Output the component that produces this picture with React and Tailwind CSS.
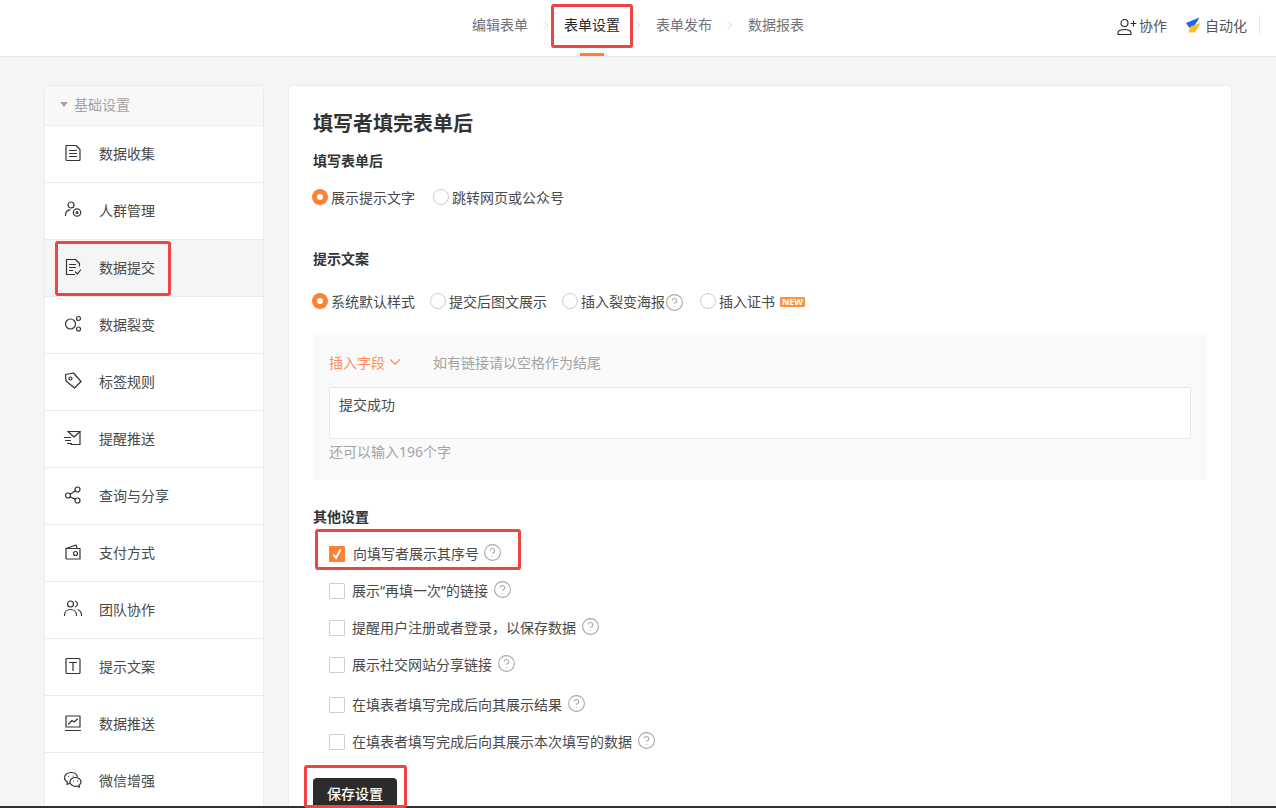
import { ChevronRight, ChevronDown, CircleHelp } from 'lucide-react';

const FONT = '"Noto Sans", "Noto Sans CJK SC", sans-serif';

const iconProps = {
  width: 20, height: 20, viewBox: '0 0 20 20', fill: 'none', stroke: '#333', strokeWidth: 1.2,
  strokeLinecap: 'round', strokeLinejoin: 'round',
};

const ICONS = {
  collect: <svg {...iconProps}><path d="M3 2.500h10l4 4v10.200a.8.8 0 0 1-.8.8H3.800a.8.8 0 0 1-.8-.8z" /><path d="M6.500 7.500h7M6.500 10.500h7M6.500 13.500h7" /></svg>,
  crowd: <svg {...iconProps}><circle cx="8" cy="5" r="3" /><path d="M2.500 15.500c0-3.200 1.800-5.300 4.500-5.600" /><circle cx="14" cy="12.500" r="3.700" /><circle cx="14" cy="12.500" r="1" /></svg>,
  submit: <svg {...iconProps}><path d="M16.500 9V6.500l-4-4H3.500v15h8" /><path d="M6.500 7.500h6M6.500 10.500h6M6.500 13.500h3" /><path d="M12.500 15l2 2 3-4" /></svg>,
  fission: <svg {...iconProps}><circle cx="7.500" cy="10" r="5" /><circle cx="15.500" cy="4.500" r="2" /><circle cx="15.500" cy="15" r="2" /></svg>,
  tag: <svg {...iconProps}><path d="M2.500 3.500L10.500 2l7.500 8.500-6.500 6.500L3 10z" /><circle cx="7.500" cy="7.500" r="1.500" /></svg>,
  remind: <svg {...iconProps}><path d="M5 3.500h12v13H8" /><path d="M5 3.500l6 5.500 6-5.500" /><path d="M1.500 9.500h6M2.500 12.500h5M4.500 15.500h4" /></svg>,
  share: <svg {...iconProps}><circle cx="5" cy="10.500" r="2.500" /><circle cx="14.500" cy="4.500" r="2.500" /><circle cx="14.500" cy="15.500" r="2.500" /><path d="M7.200 9.200l5.200-3.400M7.200 11.800l5.200 2.600" /></svg>,
  pay: <svg {...iconProps}><path d="M3 6.500l10-3.500 1 3" /><path d="M3 6.500h14v10.500H4a1 1 0 0 1-1-1z" /><circle cx="12.500" cy="11.500" r="2" /></svg>,
  team: <svg {...iconProps}><circle cx="7.500" cy="5" r="3" /><path d="M1.500 16.500c0-3.800 2.600-6 6-6s6 2.200 6 6" /><path d="M12.500 2.200a3 3 0 0 1 0 5.600M15 10.800c2.200.8 3.500 2.800 3.500 5.700" /></svg>,
  text: <svg {...iconProps}><rect x="3" y="2.500" width="14" height="15" rx="1" /><path d="M6.500 6.500h7M10 6.500v8" /></svg>,
  push: <svg {...iconProps}><path d="M3 3h14v11H3z" /><path d="M2.500 17.500h15" /><path d="M5.500 11l3.500-3.500 2 1.500 3.500-3" /></svg>,
  wechat: <svg {...iconProps}><path d="M6.500 13.200l-2.500 1.300.4-2.500C2.600 11 1.500 9.400 1.500 7.700c0-2.900 2.900-5.200 6.500-5.200 3 0 5.500 1.600 6.300 3.900" /><path d="M12.500 7.500c-3 0-5.500 2-5.500 4.400s2.500 4.400 5.500 4.400c.7 0 1.300-.1 1.900-.3l2.100 1.200-.5-2c1.300-.8 2-2 2-3.300 0-2.400-2.500-4.400-5.500-4.400z" /><path d="M5.500 6.500h.01M10 6h.01M10.500 11h.01M14.500 11h.01" /></svg>,
};

const MENU = [
  ['数据收集', 'collect'],
  ['人群管理', 'crowd'],
  ['数据提交', 'submit', true],
  ['数据裂变', 'fission'],
  ['标签规则', 'tag'],
  ['提醒推送', 'remind'],
  ['查询与分享', 'share'],
  ['支付方式', 'pay'],
  ['团队协作', 'team'],
  ['提示文案', 'text'],
  ['数据推送', 'push'],
  ['微信增强', 'wechat'],
];

const CHECKS = [
  { label: '向填写者展示其序号', checked: true, cls: 'h-[37px]' },
  { label: '展示“再填一次”的链接', cls: 'h-[37px]' },
  { label: '提醒用户注册或者登录，以保存数据', cls: 'h-[37px]' },
  { label: '展示社交网站分享链接', cls: 'h-[37px]' },
  { label: '在填表者填写完成后向其展示结果', cls: 'h-[40px] pt-[3px]' },
  { label: '在填表者填写完成后向其展示本次填写的数据', cls: 'h-[37px]' },
];

function Help({ className = '' }) {
  return <CircleHelp size={19} strokeWidth={1.4} className={`text-[#a8a8a8] ${className}`} />;
}

function Radio({ label, checked, after, className = '' }) {
  return (
    <div className={`flex items-center ${className}`}>
      {checked ? (
        <span className="mr-[3px] flex h-[16px] w-[16px] items-center justify-center rounded-full bg-[#ff8133]">
          <span className="h-[6px] w-[6px] rounded-full bg-white" />
        </span>
      ) : (
        <span className="mr-[3px] h-[16px] w-[16px] rounded-full border border-[#cfcfcf] bg-white" />
      )}
      <span className="text-[14px] text-[#4a4a4a]">{label}</span>
      {after}
    </div>
  );
}

function Tab({ label, active }) {
  return (
    <div className={`relative flex h-full items-center pb-[8px] text-[14px] ${active ? 'text-[#27272a]' : 'text-[#71717a]'}`}>
      {label}
      {active && <span className="absolute bottom-0 left-1/2 h-[3px] w-[24px] -translate-x-1/2 bg-[#ff8133]" />}
    </div>
  );
}

function Sep() {
  return <ChevronRight size={14} strokeWidth={1.2} className="mx-[11px] mb-[6px] text-[#c4c4c4]" />;
}

export default function App() {
  return (
    <div className="relative flex h-[808px] flex-col overflow-hidden bg-[#f5f5f5]" style={{ fontFamily: FONT }}>
      {/* top bar */}
      <header className="relative flex h-[57px] shrink-0 items-center justify-center border-b border-[#e8e8e8] bg-white">
        <div className="flex h-full items-center">
          <Tab label="编辑表单" />
          <Sep />
          <Tab label="表单设置" active />
          <Sep />
          <Tab label="表单发布" />
          <Sep />
          <Tab label="数据报表" />
        </div>
        <div className="absolute right-[16px] top-0 flex h-[50px] items-center text-[14px] text-[#52525b]">
          <svg width="20" height="18" viewBox="0 0 20 18" fill="none" stroke="#27272a" strokeWidth="1.1" strokeLinecap="round" className="mr-[2px] mt-[3px]">
            <circle cx="7.500" cy="5" r="3.500" />
            <path d="M1 16.500v-1.500c0-2.200 2-3.500 6.500-3.500s6.500 1.300 6.500 3.500v1.500z" />
            <path d="M14 5.500h5M16.500 3v5" />
          </svg>
          <span>协作</span>
          <svg width="16" height="16" viewBox="0 0 16 16" className="ml-[18px] mr-[4px]">
            <path d="M14.500 0.500L1 6l3.500 5L10 8z" fill="#2563eb" />
            <path d="M15.500 6L5.500 9.500 3.500 15.500h6.500z" fill="#fbbf24" />
          </svg>
          <span>自动化</span>
          <span className="ml-[12px] h-[20px] w-px bg-[#e5e5e5]" />
        </div>
      </header>

      <main className="flex min-h-0 flex-1 items-start gap-[24px] overflow-hidden pl-[44px] pr-[44px] pt-[28px]">
        {/* side menu */}
        <aside className="w-[220px] shrink-0 rounded-t-[4px] border border-[#ececec] bg-white">
          <div className="flex h-[40px] items-center border-b border-[#ececec] bg-[#f8f8f8] pb-[2px] pl-[15px] text-[14px] text-[#a3a3a3]">
            <span className="mr-[6px] h-0 w-0 border-x-[4px] border-t-[5px] border-x-transparent border-t-[#a3a3a3]" />
            基础设置
          </div>
          {MENU.map(([label, icon, active]) => (
            <div key={label} className={`flex h-[57px] items-center border-b border-[#ececec] pb-[2px] pl-[18px] text-[14px] text-[#4a4a4a] ${active ? 'bg-[#f5f5f5]' : ''}`}>
              <span className="mr-[16px] flex w-[20px] justify-center">{ICONS[icon]}</span>
              {label}
            </div>
          ))}
        </aside>

        {/* form card */}
        <section className="w-[944px] shrink-0 rounded-t-[4px] border border-[#ececec] bg-white px-[24px] pt-[23px]">
          <h1 className="text-[20px] font-bold leading-[30px] text-[#333]">填写者填完表单后</h1>
          <h2 className="mt-[11px] text-[14px] font-bold leading-[22px] text-[#333]">填写表单后</h2>
          <div className="-ml-px mt-[14px] flex h-[22px] items-center">
            <Radio label="展示提示文字" checked />
            <Radio label="跳转网页或公众号" className="ml-[18px]" />
          </div>
          <h2 className="mt-[40px] text-[14px] font-bold leading-[22px] text-[#333]">提示文案</h2>
          <div className="-ml-px mt-[20px] flex h-[22px] items-center">
            <Radio label="系统默认样式" checked />
            <Radio label="提交后图文展示" className="ml-[15px]" />
            <Radio label="插入裂变海报" className="ml-[15px]" after={<Help className="mt-[3px]" />} />
            <Radio
              label="插入证书"
              className="ml-[16px]"
              after={<span className="ml-[5px] mt-[2px] rounded-[1px] bg-[#ff9240] px-[2px] text-[9px] font-bold leading-[10px] text-white">NEW</span>}
            />
          </div>

          <div className="mt-[21px] h-[147px] rounded-[2px] bg-[#fafafa] px-[16px] pt-[18px]">
            <div className="flex h-[22px] items-center text-[14px]">
              <span className="text-[#ff8a5c]">插入字段</span>
              <ChevronDown size={18} strokeWidth={1.5} className="ml-[1px] text-[#ff8a5c]" />
              <span className="ml-[29px] text-[#a3a3a3]">如有链接请以空格作为结尾</span>
            </div>
            <div className="mt-[14px] h-[52px] rounded-[2px] border border-[#e8e8e8] bg-white px-[9px] py-[7px] text-[14px] leading-[20px] text-[#4a4a4a]">
              提交成功
            </div>
            <p className="mt-[2px] text-[14px] leading-[22px] text-[#a3a3a3]">还可以输入196个字</p>
          </div>

          <h2 className="mt-[26px] text-[14px] font-bold leading-[22px] text-[#333]">其他设置</h2>
          <div className="mt-[7px] pl-[16px]">
            {CHECKS.map((c) => (
              <div key={c.label} className={`flex items-center ${c.cls}`}>
                {c.checked ? (
                  <span className="mr-[8px] flex h-[16px] w-[16px] items-center justify-center rounded-[1px] bg-[#ff8133]">
                    <svg width="10" height="12" viewBox="0 0 10 12" fill="none" stroke="#fff" strokeWidth="1.800"><path d="M1.500 6.500l2.500 3.500 4.500-8.500" /></svg>
                  </span>
                ) : (
                  <span className="mr-[7px] h-[16px] w-[16px] rounded-[1px] border border-[#cfcfcf] bg-white" />
                )}
                <span className="text-[14px] text-[#4a4a4a]">{c.label}</span>
                <Help className={`-mt-[3px] ${c.checked ? 'ml-[4px]' : 'ml-[5px]'}`} />
              </div>
            ))}
          </div>
          <button className="mt-[18px] h-[30px] w-[84px] rounded-t-[4px] bg-[#2b2b2b] text-[14px] font-medium text-white">保存设置</button>
        </section>
      </main>

      <div className="h-[2px] shrink-0 bg-[#2f2f2f]" />

      {/* red annotation boxes */}
      <div className="absolute left-[551px] top-[4px] h-[44px] w-[82px] rounded-[3px] border-[3px] border-[#ef4444]" />
      <div className="absolute left-[55px] top-[241px] h-[55px] w-[116px] rounded-[3px] border-[3px] border-[#ef4444]" />
      <div className="absolute left-[315px] top-[529px] h-[41px] w-[206px] rounded-[3px] border-[3px] border-[#ef4444]" />
      <div className="absolute left-[304px] top-[765px] h-[43px] w-[103px] rounded-[3px] border-[3px] border-[#ef4444]" />
    </div>
  );
}
